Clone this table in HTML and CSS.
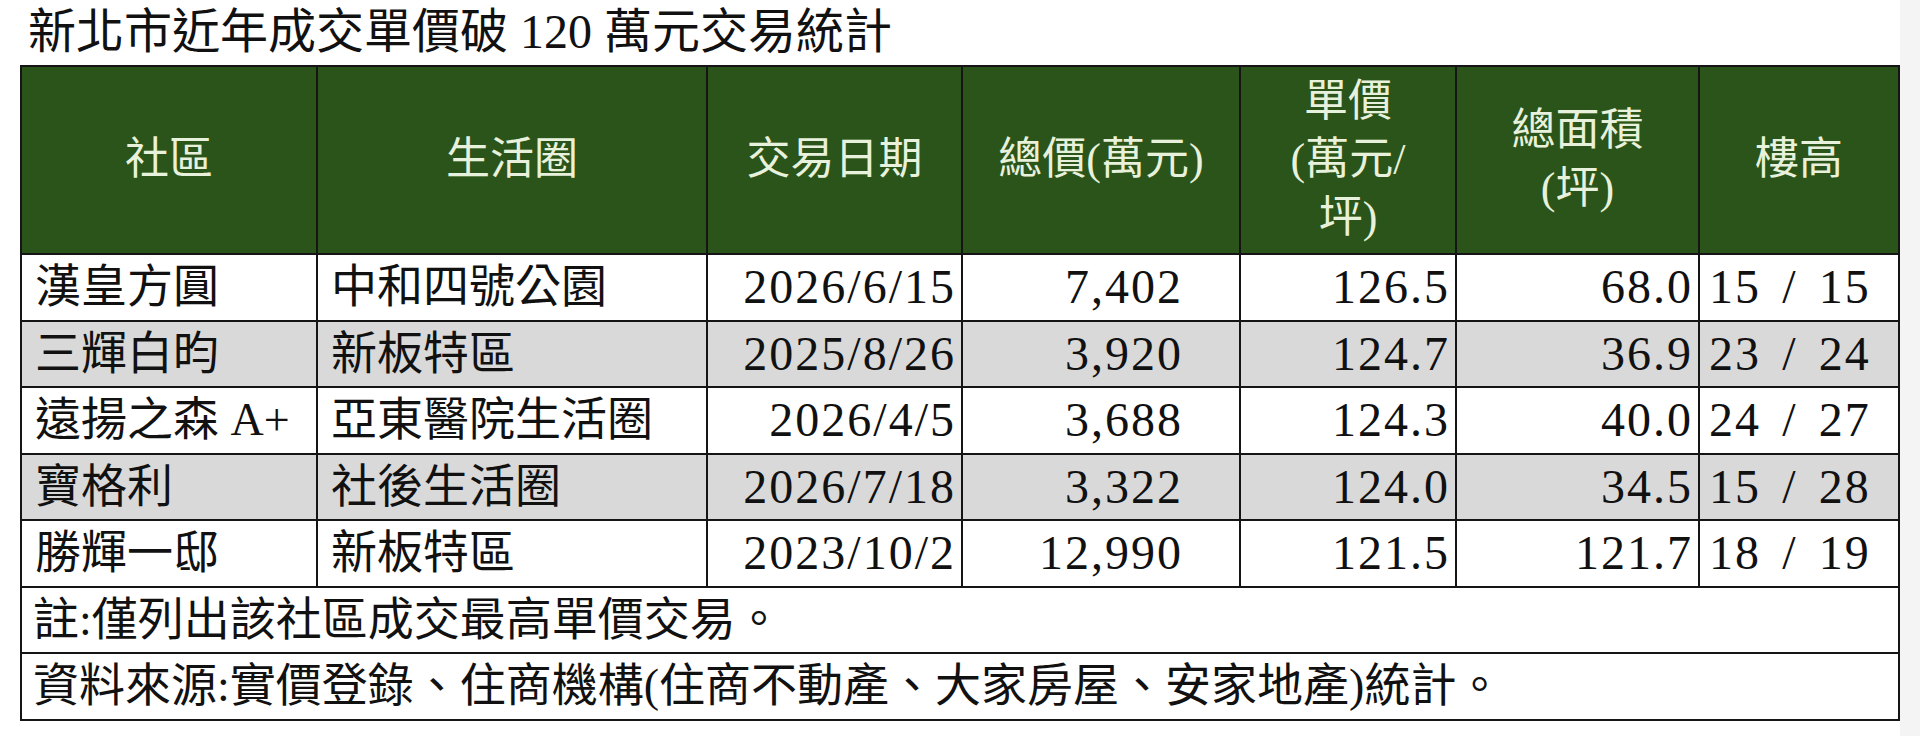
FILE: index.html
```html
<!DOCTYPE html>
<html lang="zh-Hant">
<head>
<meta charset="utf-8">
<title>新北市近年成交單價破 120 萬元交易統計</title>
<link rel="stylesheet" href="styles.css">
</head>
<body>
<div class="page">
  <main class="content">
    <h1 class="title">新北市近年成交單價破 120 萬元交易統計</h1>
    <table class="stats">
      <colgroup>
        <col class="c-name"><col class="c-area"><col class="c-date"><col class="c-total"><col class="c-unit"><col class="c-size"><col class="c-floor">
      </colgroup>
      <thead>
        <tr class="head-row">
          <th>社區</th>
          <th>生活圈</th>
          <th>交易日期</th>
          <th>總價(萬元)</th>
          <th>單價<br>(萬元/<br>坪)</th>
          <th>總面積<br>(坪)</th>
          <th>樓高</th>
        </tr>
      </thead>
      <tbody>
        <tr class="data-row">
          <td class="txt">漢皇方圓</td><td class="txt">中和四號公園</td><td class="num date">2026/6/15</td><td class="num total">7,402</td><td class="num">126.5</td><td class="num">68.0</td><td class="num floor">15 / 15</td>
        </tr>
        <tr class="data-row alt">
          <td class="txt">三輝白昀</td><td class="txt">新板特區</td><td class="num date">2025/8/26</td><td class="num total">3,920</td><td class="num">124.7</td><td class="num">36.9</td><td class="num floor">23 / 24</td>
        </tr>
        <tr class="data-row">
          <td class="txt">遠揚之森 A+</td><td class="txt">亞東醫院生活圈</td><td class="num date">2026/4/5</td><td class="num total">3,688</td><td class="num">124.3</td><td class="num">40.0</td><td class="num floor">24 / 27</td>
        </tr>
        <tr class="data-row alt">
          <td class="txt">寶格利</td><td class="txt">社後生活圈</td><td class="num date">2026/7/18</td><td class="num total">3,322</td><td class="num">124.0</td><td class="num">34.5</td><td class="num floor">15 / 28</td>
        </tr>
        <tr class="data-row">
          <td class="txt">勝輝一邸</td><td class="txt">新板特區</td><td class="num date">2023/10/2</td><td class="num total">12,990</td><td class="num">121.5</td><td class="num">121.7</td><td class="num floor">18 / 19</td>
        </tr>
        <tr class="data-row">
          <td class="note" colspan="7">註:僅列出該社區成交最高單價交易。</td>
        </tr>
        <tr class="data-row">
          <td class="note" colspan="7">資料來源:實價登錄、住商機構(住商不動產、大家房屋、安家地產)統計。</td>
        </tr>
      </tbody>
    </table>
  </main>
  <div class="edge"></div>
</div>
</body>
</html>
```

FILE: styles.css
```css
html, body {
  margin: 0;
  padding: 0;
  background: #ffffff;
}

body {
  font-family: "Liberation Serif", "Noto Sans CJK TC", serif;
  color: #111111;
}

.page {
  display: flex;
  min-height: 736px;
}

.content {
  flex: 1;
  padding: 8px 0 0 20px;
}

.edge {
  width: 20px;
  background: #f4f4f4;
}

.title {
  margin: 0 0 9px 8px;
  font-size: 48px;
  font-weight: normal;
  line-height: 48px;
}

.stats {
  border-collapse: collapse;
  table-layout: fixed;
  width: 1878px;
}

.c-name { width: 296px; }
.c-area { width: 390px; }
.c-date { width: 255px; }
.c-total { width: 278px; }
.c-unit { width: 216px; }
.c-size { width: 243px; }
.c-floor { width: 200px; }

.stats th,
.stats td {
  border: 2px solid #151515;
  padding: 0;
  vertical-align: middle;
  white-space: nowrap;
  overflow: hidden;
}

.head-row {
  height: 188px;
  background: #2a5419;
}

.stats th {
  color: #e8f1dc;
  font-weight: normal;
  font-size: 44px;
  line-height: 58px;
  text-align: center;
}

.data-row {
  height: 66.5px;
  background: #ffffff;
}

.data-row.alt {
  background: #d9d9d9;
}

.stats td {
  font-size: 46px;
  line-height: 56px;
}

.stats td.txt {
  padding-left: 13px;
  text-align: left;
}

.stats td.num {
  font-size: 48px;
  letter-spacing: 2px;
  text-align: right;
  padding-right: 5px;
}

.stats td.total {
  padding-right: 56px;
}

.stats td.floor {
  text-align: left;
  padding: 0 0 0 9px;
  white-space: pre;
  word-spacing: 0.15em;
}

.stats td.note {
  padding-left: 11px;
  text-align: left;
}
```
